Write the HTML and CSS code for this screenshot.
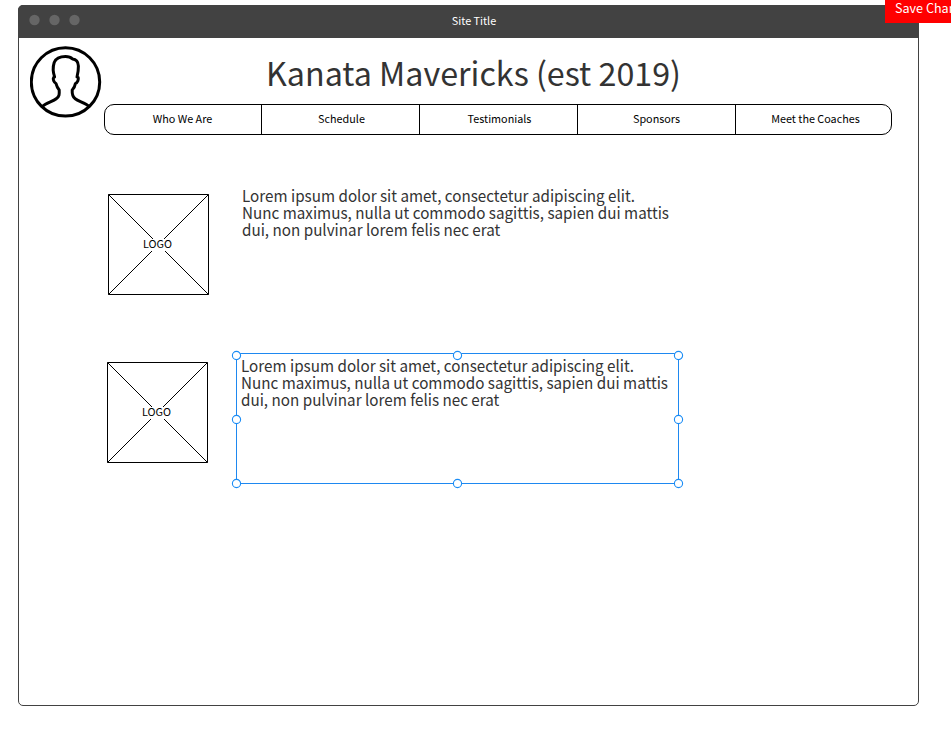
FILE: index.html
```
<!DOCTYPE html>
<html lang="en">
<head>
<meta charset="utf-8">
<title>Site Title</title>
<link rel="stylesheet" href="styles.css">
</head>
<body>
<main class="window">
  <header class="titlebar">
    <svg class="dots" width="52" height="12" viewBox="0 0 52 12" fill="#666"><circle cx="5.5" cy="6" r="5.2"/><circle cx="25.5" cy="6" r="5.2"/><circle cx="45.5" cy="6" r="5.2"/></svg>
    <span class="titlebar-text">Site Title</span>
  </header>
  <section class="masthead">
    <svg class="avatar" width="72" height="72" viewBox="0 0 72 72" fill="none" stroke="#000" stroke-width="3">
      <circle cx="35.5" cy="35.9" r="34.2"/>
      <path stroke-linejoin="round" d="M12.5 60.3C16 57 23 55.3 26.2 52.8C29.5 50.5 29.4 48 29.2 44C27.5 42 26.6 40 26 37.5C24 36.5 22.6 33 23.6 31.6L24.6 31C22.9 26 22.9 20.5 24.2 16.5C26 12.2 30.5 10.6 35.5 10.6C39 10.6 41 11.5 42.5 13C46 13.3 48.2 16 48.4 20C48.5 24 48 27 47 31L48.2 31.6C48.8 33.5 47.6 36.5 45.4 37.5C45 40 43.8 42.5 42.2 44C42 48 42.1 50.5 45.2 52.8C48.5 55.3 55.5 57 59 60.3"/>
    </svg>
    <div class="masthead-main">
      <h1 class="title">Kanata Mavericks (est 2019)</h1>
      <nav class="nav">
        <a>Who We Are</a><a>Schedule</a><a>Testimonials</a><a>Sponsors</a><a>Meet the Coaches</a>
      </nav>
    </div>
  </section>
  <section class="entry">
    <div class="logo">
      <svg width="101" height="101" viewBox="0 0 101 101" stroke="#000" fill="none"><path d="M.5 .5H100.5V100.5H.5ZL100.5 100.5M100.5 .5L.5 100.5"/></svg>
      <span>LOGO</span>
    </div>
    <p class="copy">Lorem ipsum dolor sit amet, consectetur adipiscing elit.<br>Nunc maximus, nulla ut commodo sagittis, sapien dui mattis<br>dui, non pulvinar lorem felis nec erat</p>
  </section>
  <section class="entry entry-selected">
    <div class="logo">
      <svg width="101" height="101" viewBox="0 0 101 101" stroke="#000" fill="none"><path d="M.5 .5H100.5V100.5H.5ZL100.5 100.5M100.5 .5L.5 100.5"/></svg>
      <span>LOGO</span>
    </div>
    <div class="selection">
      <p class="copy">Lorem ipsum dolor sit amet, consectetur adipiscing elit.<br>Nunc maximus, nulla ut commodo sagittis, sapien dui mattis<br>dui, non pulvinar lorem felis nec erat</p>
      <svg class="handles" width="453" height="141" viewBox="-5 -5 453 141" fill="#fff" stroke="#1a8cf5" stroke-width="1.1">
        <circle cx=".5" cy="2.5" r="4.1"/><circle cx="221.5" cy="2.5" r="4.1"/><circle cx="442.5" cy="2.5" r="4.1"/>
        <circle cx=".5" cy="66.5" r="4.1"/><circle cx="442.5" cy="66.5" r="4.1"/>
        <circle cx=".5" cy="130.5" r="4.1"/><circle cx="221.5" cy="130.5" r="4.1"/><circle cx="442.5" cy="130.5" r="4.1"/>
      </svg>
    </div>
  </section>
</main>
<button class="save">Save Changes</button>
</body>
</html>
```
FILE: styles.css
```
* { box-sizing: border-box; }
body {
  margin: 0;
  height: 732px;
  padding: 5px 0 0 18px;
  position: relative;
  overflow: hidden;
  background: #fff;
  color: #000;
  font-family: "Noto Sans CJK SC", "Noto Sans", sans-serif;
}
.window {
  width: 901px;
  height: 701px;
  border: 1px solid #424242;
  border-radius: 5px;
}
.titlebar {
  display: grid;
  grid-template-columns: 1fr auto 1fr;
  align-items: center;
  height: 33px;
  margin: -1px -1px 0;
  padding: 0 11px;
  border-radius: 5px 0 0 0;
  background: #424242;
}
.dots { margin-top: -3px; }
.titlebar-text { padding: 0 0 4px 11px; color: #fff; font-size: 10.8px; line-height: 16px; }
.masthead { display: flex; padding: 8px 0 0 11px; }
.avatar { flex: none; }
.masthead-main { width: 788px; margin-left: 2px; }
.title {
  margin: 0;
  height: 58px;
  padding-right: 49px;
  text-align: center;
  white-space: nowrap;
  color: #333;
  font-size: 32.25px;
  font-weight: 400;
  line-height: 53px;
}
.nav {
  display: grid;
  grid-template-columns: 156px 158px 158px 158px 156px;
  height: 31px;
  border: 1px solid #000;
  border-radius: 10px;
}
.nav a {
  border-left: 1px solid #000;
  text-align: center;
  font-size: 10.8px;
  line-height: 27px;
}
.nav a:first-child { border-left: 0; padding-right: 1px; }
.nav a:nth-child(2), .nav a:nth-child(3) { padding-left: 2px; }
.nav a:last-child { padding-left: 4px; }
.entry { display: flex; margin: 59px 0 0 89px; height: 101px; }
.entry-selected { margin: 67px 0 0 88px; }
.logo {
  display: grid;
  place-items: center;
  width: 101px;
  height: 101px;
  flex: none;
}
.logo svg, .logo span { grid-area: 1 / 1; }
.logo span { z-index: 1; margin-right: 2px; height: 12px; background: #fff; font-size: 10.8px; line-height: 9px; }
.copy {
  margin: -8px 0 0 33px;
  white-space: nowrap;
  color: #333;
  font-size: 15.22px;
  line-height: 16px;
  transform: scaleY(1.0625);
  transform-origin: 0 0;
}
.selection {
  position: relative;
  flex: none;
  width: 443px;
  height: 131px;
  margin: -9px 0 0 28px;
  border: 1px solid #1e88f0;
}
.selection .copy { margin: 2px 0 0 4px; }
.handles { position: absolute; left: -6px; top: -6px; }
.save {
  position: absolute;
  left: 885px;
  top: -7px;
  width: 100px;
  height: 30px;
  padding: 0 0 0 10px;
  border: 0;
  background: #f00;
  color: #fff;
  font: 12.6px/30px "Noto Sans CJK SC", "Noto Sans", sans-serif;
  text-align: left;
  white-space: nowrap;
}
```
